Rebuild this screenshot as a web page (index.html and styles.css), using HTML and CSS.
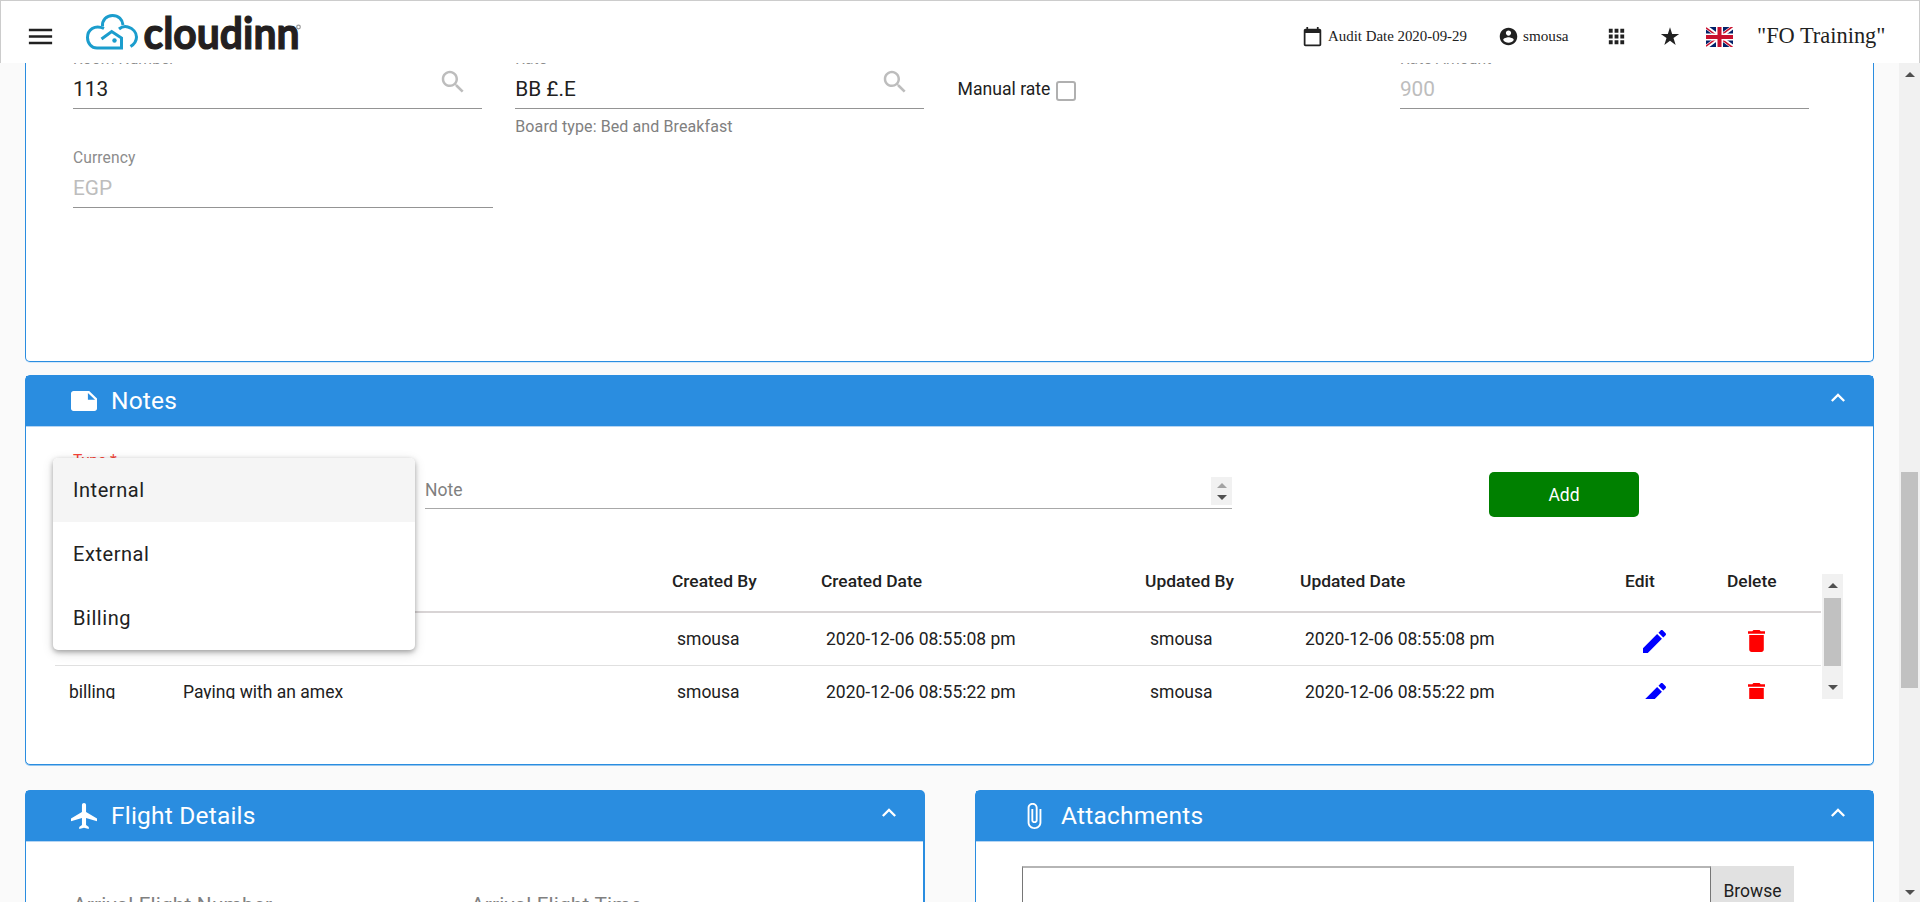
FILE: index.html
```html
<!DOCTYPE html>
<html lang="en">
<head>
  <meta charset="UTF-8">
  <title>Cloudinn | Reservation</title>
  <link rel="stylesheet" href="styles.css">
</head>
<body>
  <!-- Header -->
  <header class="topbar">
    <svg class="menu-icon" viewBox="0 0 24 24"><path d="M3 18h18v-2H3v2zm0-5h18v-2H3v2zm0-7v2h18V6H3z"/></svg>
    <svg class="logo" viewBox="0 0 220 40">
      <g fill="none" stroke="#1b9dcd" stroke-width="3">
        <path d="M18 14.500C8.500 10 1.500 16 1.500 23.500c0 6 4 10.500 9.500 10.500h24.500V24l-9.800-6.500L15.500 25"/>
        <path d="M16.500 12.500C16 6 20.500 1.500 26.500 1.500c6 0 10 4 10.500 9.500"/>
        <path d="M33 15c3-2.500 6-3 9-2 5 1.500 8.500 5.500 8.500 10 0 3.500-2 7-6 9.500"/>
      </g>
      <circle cx="28.500" cy="26.500" r="2.200" fill="#1b9dcd"/>
      <text class="logo-text" x="57.500" y="34.800" textLength="156" lengthAdjust="spacingAndGlyphs">cloudinn</text>
      <circle cx="212.500" cy="13" r="1.800" fill="none" stroke="#999" stroke-width="1.200"/>
    </svg>
    <div class="top-item audit">
      <svg viewBox="0 0 24 24"><path d="M20 3h-1V1h-2v2H7V1H5v2H4c-1.100 0-2 .9-2 2v16c0 1.100.9 2 2 2h16c1.100 0 2-.9 2-2V5c0-1.100-.9-2-2-2zm0 18H4V8h16v13z"/></svg>
      <span>Audit Date 2020-09-29</span>
    </div>
    <div class="top-item user">
      <svg viewBox="0 0 24 24"><path d="M12 2C6.480 2 2 6.480 2 12s4.480 10 10 10 10-4.480 10-10S17.520 2 12 2zm0 3c1.660 0 3 1.340 3 3s-1.340 3-3 3-3-1.340-3-3 1.340-3 3-3zm0 14.200c-2.500 0-4.710-1.280-6-3.220.030-1.990 4-3.080 6-3.080 1.990 0 5.970 1.090 6 3.080-1.290 1.940-3.500 3.220-6 3.220z"/></svg>
      <span>smousa</span>
    </div>
    <svg class="apps-icon" viewBox="0 0 24 24"><path d="M4 8h4V4H4v4zm6 12h4v-4h-4v4zm-6 0h4v-4H4v4zm0-6h4v-4H4v4zm6 0h4v-4h-4v4zm6-10v4h4V4h-4zm-6 4h4V4h-4v4zm6 6h4v-4h-4v4zm0 6h4v-4h-4v4z"/></svg>
    <svg class="star-icon" viewBox="0 0 24 24"><path d="M12 1.500l2.600 8H23l-6.800 5 2.600 8.200L12 17.600l-6.800 5.100 2.600-8.200L1 9.500h8.400z"/></svg>
    <svg class="flag" viewBox="0 0 27 20" preserveAspectRatio="none">
      <path fill="#012169" d="M0 0h27v20H0z"/>
      <path stroke="#fff" stroke-width="4" d="M0 0l27 20M27 0L0 20"/>
      <path stroke="#c8102e" stroke-width="1.500" d="M0 .8l27 20M27-.8L0 19.200"/>
      <path stroke="#fff" stroke-width="7" d="M13.500 0v20M0 10h27"/>
      <path stroke="#c8102e" stroke-width="4" d="M13.500 0v20M0 10h27"/>
    </svg>
    <span class="hotel">"FO Training"</span>
  </header>

  <div class="page">
    <main class="content">
      <!-- Room / rate fields -->
      <section class="card room-card">
        <div class="fields">
          <div class="field">
            <label>Room Number</label>
            <div class="value">113
              <svg class="search" viewBox="0 0 24 24"><path d="M15.500 14h-.79l-.28-.27C15.410 12.590 16 11.110 16 9.500 16 5.910 13.090 3 9.500 3S3 5.910 3 9.500 5.910 16 9.500 16c1.610 0 3.090-.59 4.230-1.570l.27.28v.79l5 4.990L20.490 19l-4.990-5zm-6 0C7.010 14 5 11.990 5 9.500S7.010 5 9.500 5 14 7.010 14 9.500 11.990 14 9.500 14z"/></svg>
            </div>
          </div>
          <div class="field">
            <label>Rate</label>
            <div class="value">BB £.E
              <svg class="search" viewBox="0 0 24 24"><path d="M15.500 14h-.79l-.28-.27C15.410 12.590 16 11.110 16 9.500 16 5.910 13.090 3 9.500 3S3 5.910 3 9.500 5.910 16 9.500 16c1.610 0 3.090-.59 4.230-1.570l.27.28v.79l5 4.990L20.490 19l-4.990-5zm-6 0C7.010 14 5 11.990 5 9.500S7.010 5 9.500 5 14 7.010 14 9.500 11.990 14 9.500 14z"/></svg>
            </div>
            <div class="hint">Board type: Bed and Breakfast</div>
          </div>
          <div class="check-field">
            <span>Manual rate</span>
            <span class="checkbox"></span>
          </div>
          <div class="field disabled">
            <label>Rate Amount</label>
            <div class="value">900</div>
          </div>
          <div class="field disabled currency">
            <label>Currency</label>
            <div class="value">EGP</div>
          </div>
        </div>
      </section>

      <!-- Notes -->
      <section class="card notes-card">
        <div class="card-header">
          <svg class="card-icon note-icon" viewBox="2 4 20 16" preserveAspectRatio="none"><path d="M22 10l-6-6H4c-1.100 0-2 .9-2 2v12.010c0 1.100.9 1.990 2 1.990l16-.010c1.100 0 2-.89 2-1.990v-8zm-7-4.500l5.500 5.500H15V5.500z"/></svg>
          <h2>Notes</h2>
          <svg class="chevron" viewBox="6 8 12 7.410"><path d="M12 8l-6 6 1.410 1.410L12 10.830l4.590 4.580L18 14z"/></svg>
        </div>
        <div class="note-form">
          <label class="type-label">Type *</label>
          <div class="note-input">
            <span>Note</span>
            <div class="spinner">
              <i class="arrow up light"></i>
              <i class="arrow down"></i>
            </div>
          </div>
          <button class="add-btn">Add</button>
        </div>
        <div class="notes-list">
          <div class="table">
            <div class="row head">
              <span></span><span></span>
              <span>Created By</span>
              <span>Created Date</span>
              <span>Updated By</span>
              <span>Updated Date</span>
              <span>Edit</span>
              <span>Delete</span>
            </div>
            <div class="row">
              <span></span><span></span>
              <span>smousa</span>
              <span>2020-12-06 08:55:08 pm</span>
              <span>smousa</span>
              <span>2020-12-06 08:55:08 pm</span>
              <svg class="edit" viewBox="3 3 18 18"><path d="M3 17.250V21h3.750L17.810 9.940l-3.750-3.750L3 17.250zM20.710 7.040c.39-.39.39-1.020 0-1.410l-2.340-2.340c-.39-.39-1.020-.39-1.410 0l-1.830 1.830 3.750 3.750 1.830-1.830z"/></svg>
              <svg class="delete" viewBox="5 3 14 18" preserveAspectRatio="none"><path d="M6 19c0 1.100.9 2 2 2h8c1.100 0 2-.9 2-2V7H6v12zM19 4h-3.500l-1-1h-5l-1 1H5v2h14V4z"/></svg>
            </div>
            <div class="row">
              <span>billing</span>
              <span>Paying with an amex</span>
              <span>smousa</span>
              <span>2020-12-06 08:55:22 pm</span>
              <span>smousa</span>
              <span>2020-12-06 08:55:22 pm</span>
              <svg class="edit" viewBox="3 3 18 18"><path d="M3 17.250V21h3.750L17.810 9.940l-3.750-3.750L3 17.250zM20.710 7.040c.39-.39.39-1.020 0-1.410l-2.340-2.340c-.39-.39-1.020-.39-1.410 0l-1.830 1.830 3.750 3.750 1.830-1.830z"/></svg>
              <svg class="delete" viewBox="5 3 14 18" preserveAspectRatio="none"><path d="M6 19c0 1.100.9 2 2 2h8c1.100 0 2-.9 2-2V7H6v12zM19 4h-3.500l-1-1h-5l-1 1H5v2h14V4z"/></svg>
            </div>
          </div>
          <div class="scrollbar">
            <i class="arrow up"></i>
            <div class="thumb"></div>
            <i class="arrow down"></i>
          </div>
        </div>

        <!-- Type dropdown -->
        <ul class="type-menu">
          <li class="active">Internal</li>
          <li>External</li>
          <li>Billing</li>
        </ul>
      </section>

      <!-- Flight details and attachments -->
      <div class="card-row">
        <section class="card flight-card">
          <div class="card-header">
            <svg class="card-icon flight-icon" viewBox="2 2 19 20" preserveAspectRatio="none"><path d="M21 16v-2l-8-5V3.500c0-.83-.67-1.500-1.500-1.500S10 2.670 10 3.500V9l-8 5v2l8-2.500V19l-2 1.500V22l3.500-1 3.500 1v-1.500L13 19v-5.500l8 2.500z"/></svg>
            <h2>Flight Details</h2>
            <svg class="chevron" viewBox="6 8 12 7.410"><path d="M12 8l-6 6 1.410 1.410L12 10.830l4.590 4.580L18 14z"/></svg>
          </div>
          <div class="flight-fields">
            <label>Arrival Flight Number</label>
            <label>Arrival Flight Time</label>
          </div>
        </section>
        <section class="card attach-card">
          <div class="card-header">
            <svg class="card-icon clip-icon" viewBox="6.500 1 12 22" preserveAspectRatio="none"><path d="M16.500 6v11.500c0 2.210-1.790 4-4 4s-4-1.790-4-4V5c0-1.380 1.120-2.500 2.500-2.500s2.500 1.120 2.500 2.500v10.500c0 .55-.45 1-1 1s-1-.45-1-1V6H10v9.500c0 1.380 1.120 2.500 2.500 2.500s2.500-1.120 2.500-2.500V5c0-2.210-1.790-4-4-4S7 2.790 7 5v12.500c0 3.040 2.460 5.500 5.500 5.500s5.500-2.460 5.500-5.500V6h-1.500z"/></svg>
            <h2>Attachments</h2>
            <svg class="chevron" viewBox="6 8 12 7.410"><path d="M12 8l-6 6 1.410 1.410L12 10.830l4.590 4.580L18 14z"/></svg>
          </div>
          <div class="upload">
            <div class="file-name"></div>
            <button class="browse-btn">Browse</button>
          </div>
        </section>
      </div>
    </main>

    <div class="scrollbar page-scroll">
      <i class="arrow up"></i>
      <div class="thumb"></div>
      <i class="arrow down"></i>
    </div>
  </div>
</body>
</html>
```
FILE: styles.css
```css
* {
  box-sizing: border-box;
  margin: 0;
  padding: 0;
}
body {
  height: 902px;
  overflow: hidden;
  background: #fafafa;
  color: #212121;
  font-family: Roboto, sans-serif;
  font-size: 17.5px;
}
svg {
  display: block;
  flex: none;
}
button {
  border: none;
  font-family: inherit;
}

/* Header */
.topbar {
  display: flex;
  align-items: center;
  height: 63px;
  padding: 0 34px 0 24px;
  background: #fff;
  border: 1px solid #ccc;
  border-bottom: none;
  font-family: "Liberation Serif", serif;
  font-size: 14.9px;
  white-space: nowrap;
  fill: #212121;
}
.menu-icon {
  width: 31px;
  height: 31px;
  margin-top: 8px;
}
.logo {
  width: 220px;
  height: 40px;
  margin: 4px auto 0 30px;
}
.logo-text {
  font-family: Lato, sans-serif;
  font-size: 43px;
  font-weight: 700;
  fill: #231f20;
  stroke: #231f20;
  stroke-width: 1.2;
}
.top-item {
  display: flex;
  align-items: center;
  margin-top: 8px;
}
.audit { gap: 5px; width: 196px; }
.user { gap: 4px; width: 107px; font-size: 15.2px; }
.top-item svg {
  width: 21px;
  height: 21px;
}
.apps-icon {
  width: 23px;
  height: 23px;
  margin: 8px 32px 0 0;
}
.star-icon {
  width: 20px;
  height: 20px;
  margin: 8px 26px 0 0;
}
.flag {
  width: 27px;
  height: 20px;
  margin: 9px 24px 0 0;
}
.hotel {
  width: 128px;
  margin-top: 7px;
  font-size: 22.4px;
}

/* Page */
.page {
  display: flex;
  height: 839px;
}
.content {
  flex: 1;
  height: 839px;
  padding: 0 25px;
  overflow: hidden;
}
.card {
  position: relative;
  background: #fff;
  border: 1px solid #2a8de0;
  border-radius: 5px;
}
.card-header {
  display: flex;
  align-items: center;
  height: 50px;
  padding: 0 28px 0 45px;
  background: #2a8de0;
  box-shadow: 0 1px 0 #b5d5f3;
  color: #fff;
  fill: #fff;
}
.card-header h2 {
  font-size: 24.5px;
  font-weight: 400;
  line-height: 30px;
  letter-spacing: .2px;
}
.card-icon { margin-right: 14px; }
.note-icon { width: 26px; height: 20px; }
.flight-icon { width: 26px; height: 26px; }
.clip-icon { width: 15px; height: 26px; margin: 0 19px 0 6px; }
.chevron {
  width: 14px;
  height: 9px;
  margin: -8px 0 0 auto;
}

/* Room card */
.room-card {
  display: flow-root;
  height: 299px;
  margin-bottom: 13px;
  border-top: none;
  border-radius: 0 0 5px 5px;
  box-shadow: 0 1px 0 #d4e8fa;
}
.fields {
  display: grid;
  grid-template-columns: repeat(4, 442.3px);
  grid-template-rows: 99px auto;
  margin-top: -14px;
  padding-left: 47px;
}
.field { width: 409px; }
.field label {
  display: block;
  color: #8c8c8c;
  font-size: 15.6px;
  letter-spacing: .1px;
  line-height: 20px;
}
.value {
  display: flex;
  justify-content: space-between;
  height: 34px;
  margin-top: 6px;
  border-bottom: 1px solid #949494;
  color: #212121;
  font-size: 20.8px;
  line-height: 28px;
}
.disabled .value { color: #bdbdbd; }
.currency { width: 420px; }
.search {
  width: 30px;
  height: 30px;
  margin: -8px 14px 0 0;
  fill: #bdbdbd;
}
.hint {
  margin-top: 7px;
  color: #808080;
  font-size: 16px;
  letter-spacing: .1px;
  line-height: 22px;
}
.check-field {
  display: flex;
  align-items: center;
  gap: 6px;
  height: 28px;
  margin-top: 26px;
  font-size: 17.6px;
}
.checkbox {
  width: 20px;
  height: 20px;
  margin-top: 4px;
  border: 2px solid #b0b0b0;
  border-radius: 3px;
}

/* Notes card */
.notes-card {
  height: 390px;
  margin-bottom: 25px;
  box-shadow: 0 1px 0 #94c6ef;
}
.note-form {
  display: flex;
  align-items: flex-start;
  height: 148px;
  padding: 26px 0 0 47px;
}
.type-label {
  width: 352px;
  color: #f44336;
  font-size: 15.6px;
  line-height: 18px;
}
.note-input {
  display: flex;
  justify-content: space-between;
  width: 807px;
  height: 32px;
  margin-top: 25px;
  border-bottom: 1px solid #a8a8a8;
  color: #808080;
  line-height: 27px;
}
.spinner {
  display: flex;
  flex-direction: column;
  align-items: center;
  justify-content: space-between;
  width: 21px;
  height: 28px;
  padding: 6px 0 5px;
  background: #f1f1f1;
}
.arrow {
  width: 0;
  height: 0;
  border: 5px solid transparent;
}
.arrow.up { border-top: none; border-bottom-color: #505050; }
.arrow.down { border-bottom: none; border-top-color: #505050; }
.arrow.light { border-bottom-color: #a3a3a3; }
.add-btn {
  width: 150px;
  height: 45px;
  margin: 20px 0 0 257px;
  border-radius: 5px;
  background: #008000;
  color: #fff;
  font-size: 17.5px;
}
.notes-list {
  display: flex;
  height: 125px;
  margin-left: 29px;
  overflow: hidden;
}
.table { width: 1766px; }
.row {
  display: grid;
  grid-template-columns: 114px 494px 149px 324px 155px 338px 105px 40px;
  height: 53px;
  padding-left: 14px;
  border-bottom: 1px solid #e0e0e0;
  line-height: 53px;
  white-space: nowrap;
}
.row.head {
  height: 39px;
  padding-left: 9px;
  border-bottom: 2px solid #d8d4d5;
  font-size: 17.4px;
  font-weight: 500;
  line-height: 15px;
  grid-template-columns: 114px 494px 149px 324px 155px 325px 102px 40px;
}
.edit {
  width: 23px;
  height: 23px;
  margin-top: 17px;
  fill: #0000ff;
}
.delete {
  width: 17px;
  height: 22px;
  margin-top: 17px;
  fill: #ff0000;
}
.scrollbar {
  display: flex;
  flex-direction: column;
  align-items: center;
  width: 21px;
  height: 125px;
  margin-left: 1px;
  padding: 9px 0;
  background: #f1f1f1;
}
.scrollbar .thumb {
  width: 17px;
  height: 68px;
  margin: 10px 0 auto;
  background: #c1c1c1;
}
.page-scroll {
  height: 839px;
  margin: 0;
  padding: 9px 0 7px;
}
.page-scroll .thumb {
  height: 216px;
  margin-top: 395px;
}

/* Dropdown */
.type-menu {
  position: absolute;
  top: 82px;
  left: 27px;
  width: 362px;
  height: 192px;
  border-radius: 5px;
  background: #fff;
  box-shadow: 0 2px 5px rgba(0, 0, 0, .3), 0 3px 12px rgba(0, 0, 0, .14);
  list-style: none;
  overflow: hidden;
}
.type-menu li {
  height: 64px;
  padding-left: 20px;
  font-size: 20px;
  letter-spacing: .55px;
  line-height: 64px;
}
.type-menu .active { background: #f5f5f5; }

/* Bottom cards */
.card-row {
  display: flex;
  gap: 50px;
}
.card-row .card {
  flex: 1;
  height: 160px;
}
.card-row .flight-card { border-right-width: 2px; }
.flight-card .card-header { padding-right: 27px; }
.flight-fields {
  display: flex;
  padding: 52px 0 0 47px;
  color: #808080;
  font-size: 20.8px;
  letter-spacing: .2px;
  line-height: 24px;
}
.flight-fields label { width: 398px; }
.upload {
  display: flex;
  padding: 25px 0 0 46px;
}
.file-name {
  width: 689px;
  height: 60px;
  border: 1px solid #767676;
  border-top: 2px solid #b5b5b5;
}
.browse-btn {
  width: 83px;
  height: 60px;
  padding-bottom: 11px;
  background: #e1e1e1;
  color: #212121;
  font-size: 17.5px;
}
```
